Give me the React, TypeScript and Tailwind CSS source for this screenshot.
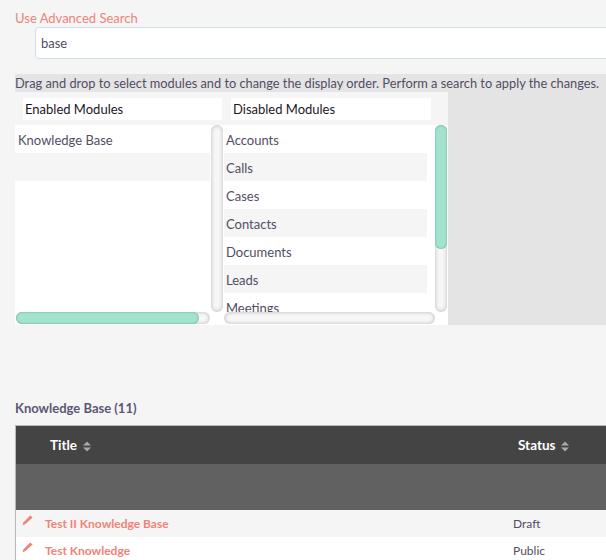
import React from "react";

const Sort = () => (
  <svg width="8" height="11" viewBox="0 0 8 11" className="ml-[6px] mt-[2px]">
    <path d="M4 0.5 L8 4.5 H0 Z M0 6.5 H8 L4 10.5 Z" fill="#a9a9a9" />
  </svg>
);

const Pencil = () => (
  <svg width="11" height="11" viewBox="0 0 11 11">
    <path d="M8.2 0.4 L10.6 2.4 L3.4 9 L0.4 10.6 L1.6 7.2 Z" fill="#f08377" />
  </svg>
);

const VBar = ({ thumb }: { thumb?: boolean }) => (
  <div className="w-[12px] h-[187px] rounded-full bg-[#f7f7f7] shadow-[inset_0_0_4px_rgba(0,0,0,0.25)]">
    {thumb && <div className="w-[12px] h-[124px] rounded-full bg-[#a2e3cd] shadow-[inset_0_0_2px_rgba(0,70,50,0.45)]" />}
  </div>
);

const HBar = ({ w, thumb }: { w: string; thumb?: boolean }) => (
  <div className={`h-[12px] rounded-full bg-[#f7f7f7] shadow-[inset_0_0_4px_rgba(0,0,0,0.25)] ${w}`}>
    {thumb && <div className="h-[12px] w-[183px] rounded-full bg-[#a2e3cd] shadow-[inset_0_0_2px_rgba(0,70,50,0.45)]" />}
  </div>
);

const Row = ({ label, alt, w }: { label?: string; alt?: boolean; w: string }) => (
  <div className={`h-[28px] shrink-0 flex items-center pt-[4px] text-[13px] text-[#534d64] ${w} ${alt ? "bg-[#f5f5f5]" : ""}`}>
    {label}
  </div>
);

export default function App() {
  const right = ["Accounts", "Calls", "Cases", "Contacts", "Documents", "Leads", "Meetings"];
  return (
    <div className="w-[606px] h-[560px] overflow-hidden bg-[#f5f5f5] font-['Lato','Liberation_Sans',sans-serif]">
      <div className="w-[640px] pt-[9px]">
        <div className="pl-[15px] h-[18px] leading-[18px] text-[13px] text-[#f08377]">Use Advanced Search</div>
        <div className="pl-[35px] mb-[15px]">
          <div className="h-[32px] flex items-center pl-[5px] pt-[2px] bg-white border border-[#cfe0ea] rounded-l-[4px] text-[13px] text-[#534d64]">
            base
          </div>
        </div>

        <div className="ml-[15px] h-[251px] bg-[#e4e4e4] flex flex-col">
          <div className="h-[18px] leading-[18px] text-[12.8px] text-[#534d64] whitespace-nowrap">
            Drag and drop to select modules and to change the display order. Perform a search to apply the changes.
          </div>
          <div className="w-[433px] flex-1 bg-[#f5f5f5] flex flex-col">
            <div className="flex pt-[6px] pl-[8px] gap-[9px] h-[33px]">
              <div className="w-[199px] h-[22px] bg-white pl-[2px] pt-px flex items-center text-[13px] text-[#1c1626]">Enabled Modules</div>
              <div className="w-[200px] h-[22px] bg-white pl-[2px] pt-px flex items-center text-[13px] text-[#1c1626]">Disabled Modules</div>
            </div>
            <div className="flex bg-white flex-1">
              <div className="w-[209px] flex flex-col">
                <div className="flex">
                  <div className="w-[196px] h-[187px]">
                    <Row label="Knowledge Base" w="pl-[3px] w-[195px]" />
                    <Row alt w="w-[195px]" />
                  </div>
                  <VBar />
                </div>
                <div className="pl-px">
                  <HBar w="w-[194px]" thumb />
                </div>
              </div>
              <div className="w-[224px] flex flex-col">
                <div className="flex">
                  <div className="w-[211px] h-[187px] overflow-hidden">
                    {right.map((r, i) => (
                      <Row key={r} label={r} alt={i % 2 === 1} w="w-[203px] pl-[2px]" />
                    ))}
                  </div>
                  <VBar thumb />
                </div>
                <HBar w="w-[211px]" />
              </div>
            </div>
          </div>
        </div>

        <div className="ml-[15px] mt-[75px] h-[16px] leading-[16px] text-[13px] font-bold text-[#5d5770]">Knowledge Base (11)</div>
        <div className="ml-[15px] mt-[9px] border-l border-t border-[#b8b8b8]">
          <div className="h-[38px] bg-[#444444] flex items-center text-[13.5px] font-bold text-white">
            <div className="w-[34px]" />
            <div className="w-[468px] flex items-center pt-px">Title<Sort /></div>
            <div className="flex items-center pt-px">Status<Sort /></div>
          </div>
          <div className="h-[46px] bg-[#616161]" />
          <div className="h-[27px] bg-[#f5f5f5] flex items-center text-[12px]">
            <div className="w-[29px] pl-[6px] -mt-[7px]"><Pencil /></div>
            <div className="w-[468px] font-bold text-[#f08377]">Test II Knowledge Base</div>
            <div className="text-[#534d64]">Draft</div>
          </div>
          <div className="h-[27px] bg-white flex items-center text-[12px]">
            <div className="w-[29px] pl-[6px] -mt-[7px]"><Pencil /></div>
            <div className="w-[468px] font-bold text-[#f08377]">Test Knowledge</div>
            <div className="text-[#534d64]">Public</div>
          </div>
        </div>
      </div>
    </div>
  );
}
